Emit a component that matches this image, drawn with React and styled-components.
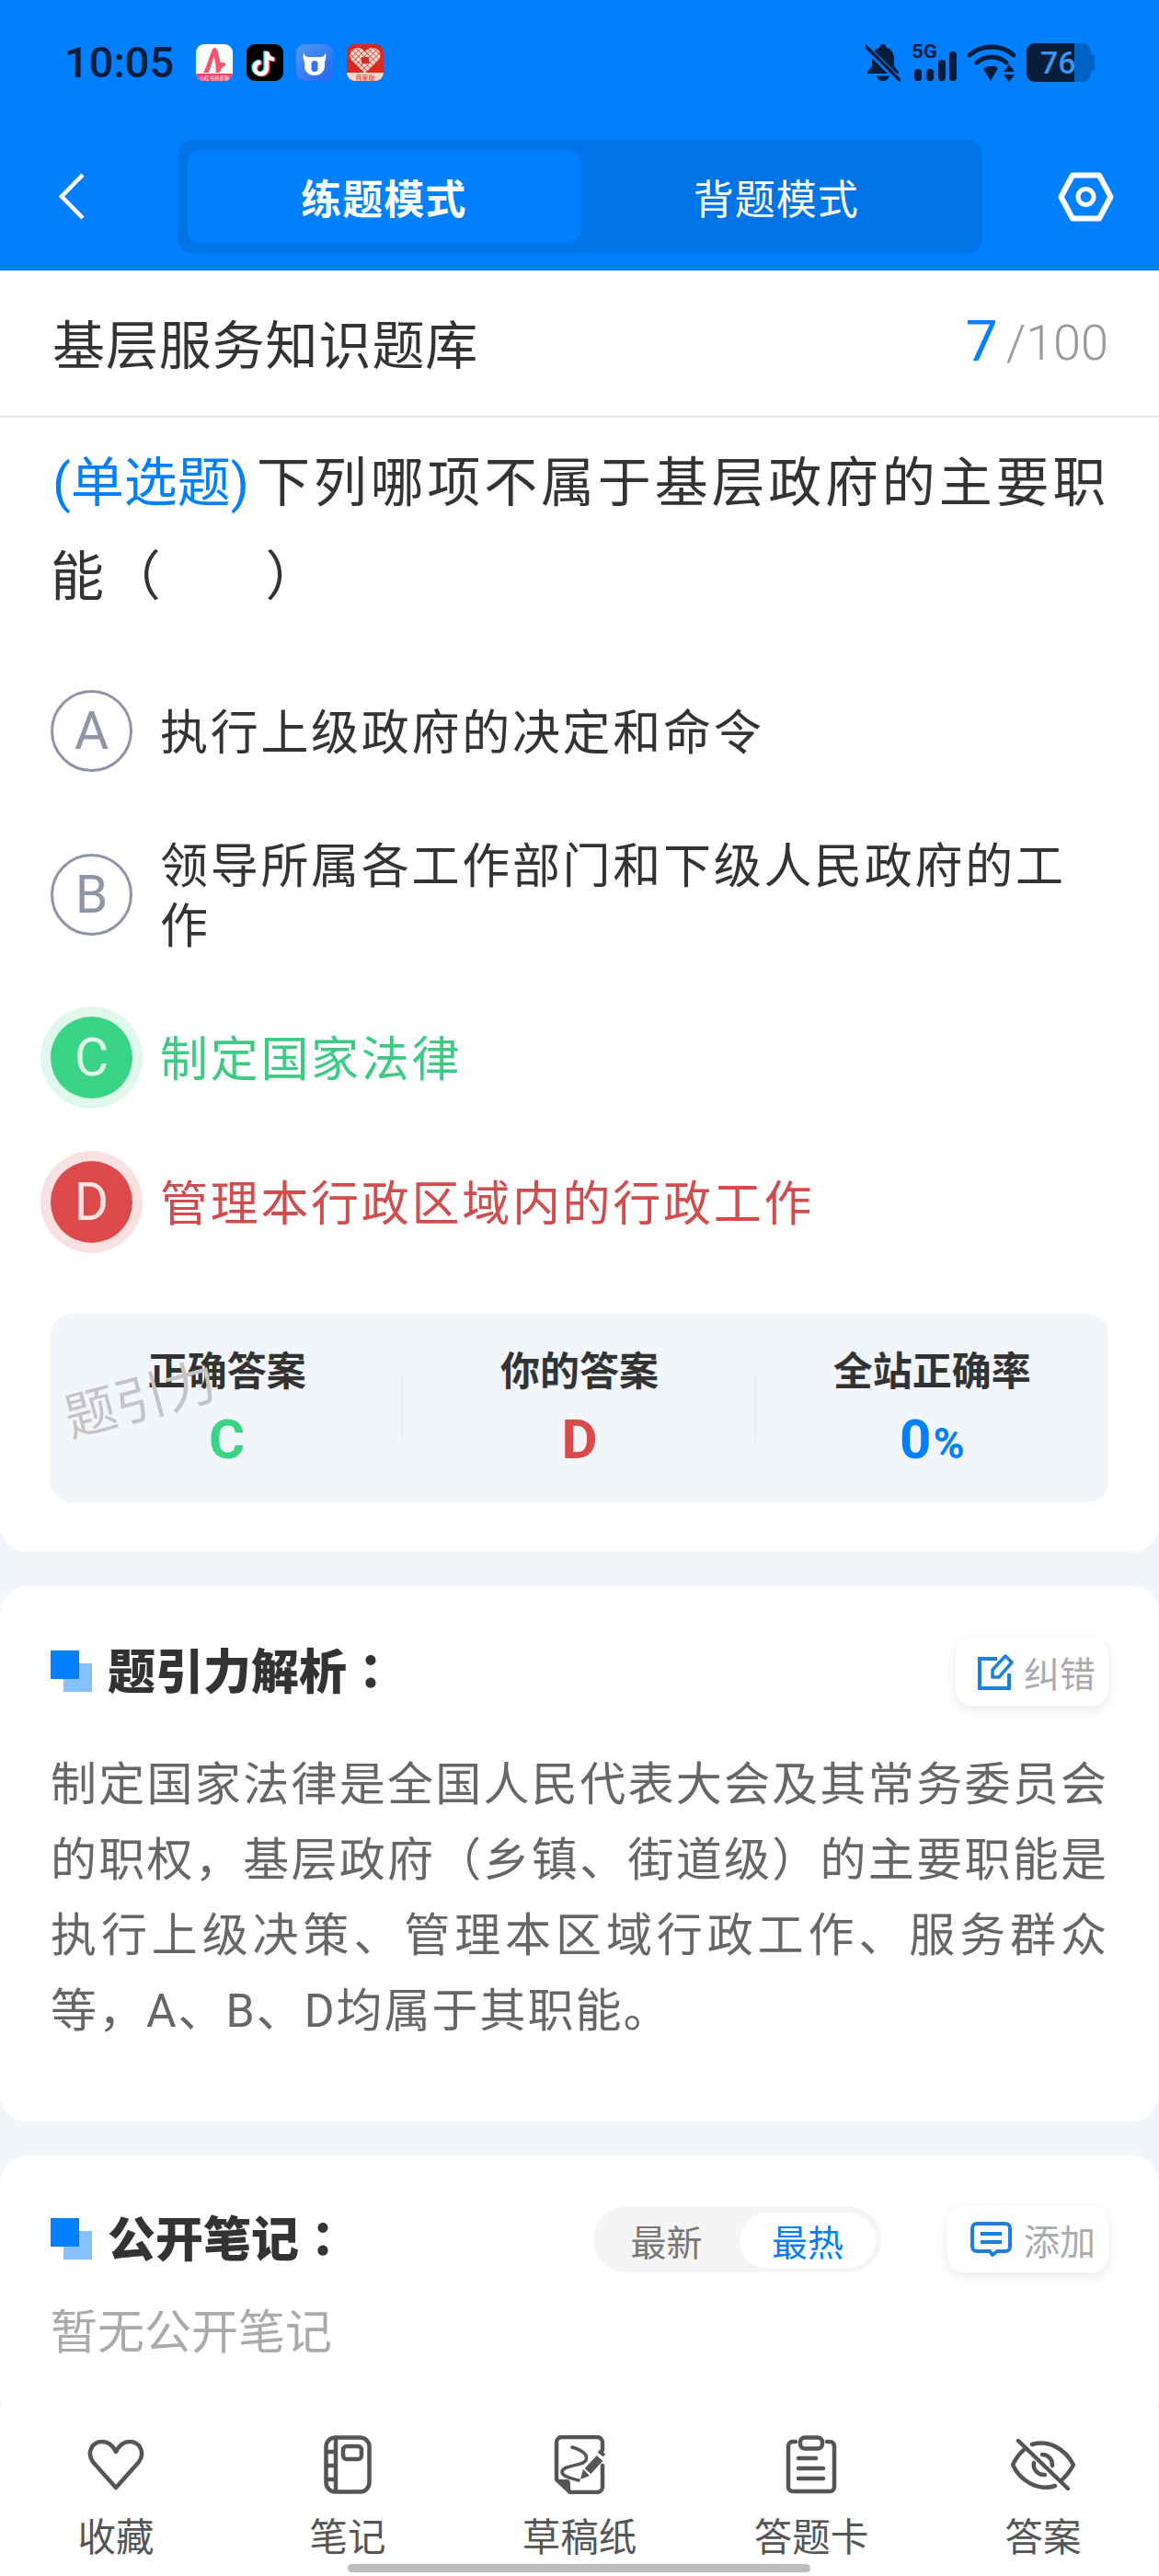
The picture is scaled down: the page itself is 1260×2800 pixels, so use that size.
import React from "react";
import styled, { createGlobalStyle } from "styled-components";

const Global = createGlobalStyle`
  html, body { margin: 0; padding: 0; background: #fff; }
  * { box-sizing: border-box; }
  body { font-family: Roboto, "Noto Sans CJK SC", sans-serif; }
`;

const BLUE = "#0080ff";
const DARK = "#071d3a";

const Page = styled.div`
  width: 1260px;
  height: 2800px;
  display: flex;
  flex-direction: column;
  position: relative;
  overflow: hidden;
  background: #f2f5f9;
`;
const Header = styled.header`
  height: 294px;
  flex: none;
  background: ${BLUE};
  padding-top: 47px;
`;
const StatusBar = styled.div`
  height: 42px;
  display: flex;
  align-items: center;
  padding: 0 70px;
`;
const Time = styled.span`
  font-size: 47px;
  line-height: 42px;
  font-weight: 500;
  color: ${DARK};
  width: 143px;
  flex: none;
`;
const AppIcons = styled.div`
  display: flex;
  gap: 14.5px;
  flex: 1;
`;
const SysIcons = styled.div`
  display: flex;
  align-items: center;
  gap: 12px;
`;
const NavRow = styled.div`
  margin-top: 63px;
  display: flex;
  align-items: center;
  padding-left: 64px;
`;
const Segment = styled.div`
  width: 875px;
  height: 123px;
  margin: 0 82px 0 101px;
  padding: 11px;
  display: flex;
  border-radius: 16px;
  background: #0073e6;
`;
const SegTab = styled.div`
  flex: 1;
  display: flex;
  align-items: center;
  justify-content: center;
  border-radius: 14px;
  font-size: 44px;
  letter-spacing: 1px;
  color: #fff;
  font-weight: ${(p) => (p.$on ? 700 : 400)};
  background: ${(p) => (p.$on ? BLUE : "transparent")};
`;
const Scroll = styled.main`
  flex: 1;
  min-height: 0;
  overflow: hidden;
`;
const Card = styled.section`
  background: #fff;
  padding: 0 55px;
  margin-bottom: 37px;
  border-radius: ${(p) => (p.$first ? "0 0 30px 30px" : "30px")};
  height: ${(p) => p.$h}px;
`;
const TitleRow = styled.div`
  height: 160px;
  margin: 0 -55px;
  padding: 0 55px 5px;
  display: flex;
  align-items: center;
  justify-content: space-between;
  border-bottom: 2px solid #e5e5e5;
`;
const BankName = styled.h1`
  margin: 0 0 0 2px;
  font-size: 57px;
  font-weight: 400;
  letter-spacing: 0.9px;
  color: #333;
`;
const Counter = styled.div`
  display: flex;
  align-items: center;
  padding-top: 4px;
  line-height: 70px;
  color: #999;
  font-size: 54px;
  font-weight: 300;
`;
const CounterNow = styled.span`
  color: ${BLUE};
  font-size: 62px;
  font-weight: 400;
  margin: -4px 9px 0 0;
`;
const Question = styled.p`
  margin: 20px -10px 0 0;
  font-size: 58px;
  line-height: 102px;
  letter-spacing: 3.8px;
  color: #333;
`;
const QType = styled.span`
  color: ${BLUE};
  letter-spacing: 0;
  margin-right: 8px;
  margin-left: 2px;
`;
const Blank = styled.span`
  display: inline-block;
  width: 110px;
`;
const Options = styled.div`
  margin-top: 72px;
  display: flex;
  flex-direction: column;
  gap: 68px;
`;
const Option = styled.div`
  display: flex;
  align-items: center;
  gap: 30px;
`;
const Badge = styled.div`
  width: 89px;
  height: 89px;
  flex: none;
  border-radius: 50%;
  display: flex;
  align-items: center;
  justify-content: center;
  font-size: 57px;
  font-weight: 400;
  ${(p) =>
    p.$state === "right"
      ? "background:#3bd385;color:#dff7ea;box-shadow:0 0 0 11px #e0f7ec;"
      : p.$state === "wrong"
      ? "background:#dc4a4c;color:#fbe3e3;box-shadow:0 0 0 11px #f9e1e1;"
      : "border:3px solid #8f94a7;color:#8f94a7;"}
`;
const OptionText = styled.div`
  padding-top: 3px;
  margin-bottom: -3px;
  font-size: 52px;
  line-height: 65px;
  letter-spacing: 2.7px;
  color: ${(p) =>
    p.$state === "right" ? "#3dcb84" : p.$state === "wrong" ? "#d24c4e" : "#333"};
`;
const Stats = styled.div`
  position: relative;
  margin-top: 77px;
  height: 205px;
  padding-top: 33px;
  display: grid;
  grid-template-columns: repeat(3, 1fr);
  border-radius: 22px;
  background: #f2f5f9;
`;
const Stat = styled.div`
  position: relative;
  text-align: center;
  &:nth-child(-n + 2)::after {
    content: "";
    position: absolute;
    right: 0;
    top: 34px;
    height: 72px;
    width: 2px;
    background: #e9ecf1;
  }
`;
const StatLabel = styled.div`
  font-size: 43px;
  line-height: 60px;
  font-weight: 700;
  color: #333;
`;
const StatValue = styled.div`
  margin-top: 9px;
  font-size: 60px;
  line-height: 70px;
  font-weight: 700;
  color: ${(p) => p.$c};
`;
const Percent = styled.span`
  font-size: 46px;
  margin-left: 2px;
`;
const Watermark = styled.div`
  position: absolute;
  left: 14px;
  top: 64px;
  font-size: 56px;
  line-height: 60px;
  font-weight: 400;
  color: #c4c4c4;
  transform: rotate(-15deg);
  pointer-events: none;
`;
const SectionHead = styled.div`
  padding-top: ${(p) => p.$top}px;
  display: flex;
  align-items: center;
`;
const Mark = styled.span`
  width: 45px;
  height: 45px;
  flex: none;
  position: relative;
  margin-right: 17px;
  &::before, &::after { content: ""; position: absolute; width: 31px; height: 31px; }
  &::after { right: 0; bottom: 0; background: #85c1ff; }
  &::before { left: 0; top: 0; background: ${BLUE}; z-index: 1; }
`;
const SectionTitle = styled.h2`
  margin: 0;
  flex: 1;
  font-size: 52px;
  line-height: 72px;
  font-weight: 900;
  color: #333;
`;
const Colon = styled.span`
  font-family: "Noto Sans CJK TC", sans-serif;
`;
const ChipButton = styled.div`
  height: ${(p) => p.$h}px;
  display: flex;
  align-items: center;
  gap: ${(p) => p.$gap}px;
  padding: 0 14px 0 ${(p) => p.$left}px;
  background: #fff;
  border-radius: 18px;
  box-shadow: 0 4px 14px rgba(0, 0, 0, 0.09);
  font-size: 39px;
  color: #aaa;
`;
const Paragraph = styled.p`
  margin: 44px 0 0;
  font-size: 50px;
  line-height: 82px;
  letter-spacing: 2px;
  color: #666;
  text-align: justify;
`;
const SortPill = styled.div`
  width: 313px;
  height: 72px;
  margin-right: 72px;
  padding: 7px 6px 5px 0;
  display: flex;
  border-radius: 36px;
  background: #f5f5f5;
`;
const SortItem = styled.div`
  display: flex;
  align-items: center;
  justify-content: center;
  width: ${(p) => p.$w}px;
  border-radius: 31px;
  font-size: 39px;
  color: ${(p) => (p.$on ? BLUE : "#777")};
  background: ${(p) => (p.$on ? "#fff" : "transparent")};
`;
const Empty = styled.div`
  margin-top: 29px;
  font-size: 51px;
  line-height: 70px;
  color: #aaa;
`;
const TabBar = styled.nav`
  height: 183px;
  flex: none;
  display: grid;
  grid-template-columns: repeat(5, 1fr);
  background: #fff;
`;
const Tab = styled.div`
  display: flex;
  flex-direction: column;
  align-items: center;
  color: #555;
`;
const TabIcon = styled.div`
  height: 64px;
  margin-top: 30px;
  display: flex;
  align-items: center;
  justify-content: center;
`;
const TabLabel = styled.div`
  margin-top: 23px;
  font-size: 41.5px;
  line-height: 50px;
  color: #555;
`;
const HomeBar = styled.div`
  position: absolute;
  left: 378px;
  bottom: 4px;
  width: 503px;
  height: 9px;
  border-radius: 5px;
  background: #bdbdbd;
`;

const RedApp = () => (
  <svg width="40" height="40" viewBox="0 0 40 40">
    <defs>
      <clipPath id="rr1"><rect width="40" height="40" rx="9" /></clipPath>
    </defs>
    <g clipPath="url(#rr1)">
      <rect width="40" height="40" fill="#fff" />
      <path d="M20 4 C22.500 4 23.500 6 24 9 L26.500 20 C29 19 32 20 33 23 C29 24 27 27 25.500 31 L21.500 31 C22 26 21.500 19 19.500 14 L14 31 L8 31 C13 23 16.500 4 20 4 Z" fill="#f4556a" />
      <rect y="32" width="40" height="8" fill="#e9436a" />
      <text x="20" y="38.500" fontSize="5.500" textAnchor="middle" fill="#fff" fontFamily="Noto Sans CJK SC">小红书商家版</text>
    </g>
  </svg>
);
const TikTok = () => {
  const d = "M22 8 V26 a6.5 6.5 0 1 1 -6.5 -6.5 M22 9 c0.5 4 3.500 7 8 7.500";
  return (
    <svg width="40" height="40" viewBox="0 0 40 40">
      <rect width="40" height="40" rx="9" fill="#000" />
      <path d={d} fill="none" stroke="#25f4ee" strokeWidth="4.500" transform="translate(-1.400 -0.800)" />
      <path d={d} fill="none" stroke="#fe2c55" strokeWidth="4.500" transform="translate(1.400 0.800)" />
      <path d={d} fill="none" stroke="#fff" strokeWidth="4.500" />
    </svg>
  );
};
const BullApp = () => (
  <svg width="40" height="40" viewBox="0 0 40 40">
    <defs>
      <linearGradient id="bull" x1="0" y1="0" x2="1" y2="1">
        <stop offset="0" stopColor="#4f97f3" />
        <stop offset="1" stopColor="#2566f2" />
      </linearGradient>
    </defs>
    <rect width="40" height="40" rx="9" fill="url(#bull)" />
    <path d="M8 9 C9 13 11 14 14 14 H26 C29 14 31 13 32 9 C33 14 32 17 31 19 V24 C31 30 26 34 20 34 C14 34 9 30 9 24 V19 C8 17 7 14 8 9 Z" fill="#fff" />
    <rect x="16.500" y="18" width="7" height="12" rx="3.500" fill="#2f74f3" />
  </svg>
);
const HeartApp = () => (
  <svg width="40" height="40" viewBox="0 0 40 40">
    <defs>
      <clipPath id="rr4"><rect width="40" height="40" rx="9" /></clipPath>
      <pattern id="lat" width="4.500" height="4.500" patternUnits="userSpaceOnUse" patternTransform="rotate(45)">
        <rect width="4.500" height="4.500" fill="#f8ded5" />
        <path d="M0 0 H4.500 M0 0 V4.500" stroke="#d8281f" strokeWidth="1.300" />
      </pattern>
    </defs>
    <g clipPath="url(#rr4)">
      <rect width="40" height="40" fill="#d8281f" />
      <path d="M20 32 L5 17 C1 11 5 4 12 4 C16 4 18 6 20 8 C22 6 24 4 28 4 C35 4 39 11 35 17 Z" fill="url(#lat)" />
      <rect x="16" y="14" width="8" height="7" fill="#d8281f" />
      <rect y="31" width="40" height="9" fill="#fbd9d0" />
      <text x="20" y="38.500" fontSize="7" textAnchor="middle" fill="#d8281f" fontFamily="Noto Sans CJK SC">商家版</text>
    </g>
  </svg>
);

const BellOff = () => (
  <svg width="38" height="42" viewBox="0 0 38 42">
    <path d="M19 1 C16.500 1 15.500 3 15.500 4.500 C10 6 7 11 7 17 V25 L2 31 V33 H36 V31 L31 25 V17 C31 11 28 6 22.500 4.500 C22.500 3 21.500 1 19 1 Z" fill={DARK} />
    <path d="M12 35.500 H26 C25 39 22 41 19 41 C16 41 13 39 12 35.500 Z" fill={DARK} />
    <path d="M1 5 L36 40" stroke={BLUE} strokeWidth="7" />
    <path d="M0 3 L37 40" stroke={DARK} strokeWidth="3.500" strokeLinecap="round" />
  </svg>
);
const Signal = () => (
  <svg width="49" height="42" viewBox="0 0 49 42">
    <text x="0" y="16" fontSize="20" fontWeight="700" fill={DARK} fontFamily="Roboto" textLength="28" lengthAdjust="spacingAndGlyphs">5G</text>
    <rect x="3" y="28" width="8" height="13" rx="3.500" fill={DARK} />
    <rect x="16" y="28" width="8" height="13" rx="3.500" fill={DARK} />
    <rect x="29" y="18" width="8" height="23" rx="3.500" fill={DARK} />
    <rect x="41" y="9" width="8" height="32" rx="3.500" fill={DARK} />
  </svg>
);
const Wifi = () => (
  <svg width="52" height="42" viewBox="0 0 52 42">
    <g fill="none" stroke={DARK} strokeWidth="5" strokeLinecap="round">
      <path d="M2 13 C15 1 37 1 50 13" />
      <path d="M10 21 C19 13 33 13 42 21" />
    </g>
    <path d="M17 28 C22 24 30 24 33 27 L25 41 Z" fill={DARK} />
    <path d="M45 23 L51 31 H39 Z M45 42 L39 34 H51 Z" fill={DARK} />
  </svg>
);
const Battery = () => (
  <svg width="74" height="42" viewBox="0 0 74 42">
    <rect x="0" y="0" width="70" height="42" rx="9" fill="#0062c4" />
    <rect x="70" y="12" width="4" height="18" rx="2" fill="#0062c4" />
    <path d="M9 0 H52 V42 H9 A9 9 0 0 1 0 33 V9 A9 9 0 0 1 9 0 Z" fill={DARK} />
    <text x="15" y="33" fontSize="34" fontWeight="500" fill="#3e94f2" fontFamily="Roboto">76</text>
  </svg>
);
const Back = () => (
  <svg width="28" height="51" viewBox="0 0 28 51">
    <path d="M26 2 L3 25.500 L26 49" fill="none" stroke="#fff" strokeWidth="4.500" />
  </svg>
);
const Gear = () => (
  <svg width="61" height="54" viewBox="0 0 61 54">
    <path d="M16 3.500 H45 L57.500 27 L45 50.500 H16 L3.500 27 Z" fill="none" stroke="#fff" strokeWidth="6" strokeLinejoin="round" />
    <circle cx="30.500" cy="27" r="8.500" fill="none" stroke="#fff" strokeWidth="5" />
  </svg>
);
const EditIcon = () => (
  <svg width="40" height="40" viewBox="0 0 40 40">
    <path d="M21 6 H2 V38 H34 V22" fill="none" stroke="#1a80e0" strokeWidth="4" />
    <path d="M16 26 V18 L30 3 L37 10 L23 26 Z" fill="none" stroke="#1a80e0" strokeWidth="3.500" strokeLinejoin="round" />
  </svg>
);
const NoteIcon = () => (
  <svg width="45" height="38" viewBox="0 0 45 38">
    <path d="M7 2 H38 A5 5 0 0 1 43 7 V27 A5 5 0 0 1 38 32 H29 L24 36 L21 32 H7 A5 5 0 0 1 2 27 V7 A5 5 0 0 1 7 2 Z" fill="none" stroke="#1a80e0" strokeWidth="4" strokeLinejoin="round" />
    <path d="M11 13 H34 M11 22 H34" stroke="#1a80e0" strokeWidth="4" />
  </svg>
);

const S = { fill: "none", stroke: "#555", strokeWidth: 4.5, strokeLinecap: "round", strokeLinejoin: "round" };
const Heart = () => (
  <svg width="64" height="56" viewBox="0 0 64 56">
    <path {...S} d="M32 53 L7 25 C0 15 6 3 17 3 C24 3 29 8 32 14 C35 8 40 3 47 3 C58 3 64 15 57 25 Z" />
  </svg>
);
const Notebook = () => (
  <svg width="52" height="64" viewBox="0 0 52 64">
    <rect {...S} x="2.500" y="2.500" width="47" height="59" rx="10" />
    <path {...S} strokeLinecap="butt" d="M13 3 V61 M3 18 H13 M3 33 H13 M3 48 H13" />
    <rect {...S} x="21" y="12" width="20" height="14" rx="4" />
  </svg>
);
const Draft = () => (
  <svg width="56" height="64" viewBox="0 0 56 64">
    <path {...S} d="M53 16 V8 A6 6 0 0 0 47 2 H9 A6 6 0 0 0 3 8 V48 L18 62 H47 A6 6 0 0 0 53 56 V33" />
    <path d="M3 48 H14 A4 4 0 0 1 18 52 V62 Z" fill="#555" />
    <path {...S} strokeWidth="3.500" d="M20 13 C30 16 38 21 35 27 C32 34 9 32 9 40 C9 45 20 47 27 49" />
    <path d="M50 25 L37 39" stroke="#555" strokeWidth="9" />
    <path d="M32 37 L39 44 L29 48 Z" fill="#555" />
    <path d="M49 17 L55 22" stroke="#555" strokeWidth="4" />
  </svg>
);
const CardIcon = () => (
  <svg width="56" height="64" viewBox="0 0 56 64">
    <path {...S} d="M11 7 H8 A5 5 0 0 0 3 12 V56 A5 5 0 0 0 8 61 H48 A5 5 0 0 0 53 56 V12 A5 5 0 0 0 48 7 H45" />
    <rect {...S} x="16" y="2.500" width="24" height="12" rx="5" />
    <path {...S} d="M14 25 H33 M14 36 H41 M14 47 H41" />
  </svg>
);
const EyeOff = () => (
  <svg width="70" height="56" viewBox="0 0 70 56">
    <path {...S} d="M8 2 L62 54" />
    <path {...S} d="M23 6 C41 1 58 10 68 28 C65 34 60 40 56 44" />
    <path {...S} d="M14 12 C9 16 5 22 2 28 C10 46 30 57 48 51" />
    <path {...S} d="M25 26 A11 11 0 0 0 37 39" />
    <path {...S} d="M34 17 A11 11 0 0 1 45 29" />
  </svg>
);

const tabs = [
  ["收藏", <Heart key="h" />],
  ["笔记", <Notebook key="n" />],
  ["草稿纸", <Draft key="d" />],
  ["答题卡", <CardIcon key="c" />],
  ["答案", <EyeOff key="e" />],
];

export default function App() {
  return (
    <Page>
      <Global />
      <Header>
        <StatusBar>
          <Time>10:05</Time>
          <AppIcons>
            <RedApp />
            <TikTok />
            <BullApp />
            <HeartApp />
          </AppIcons>
          <SysIcons>
            <BellOff />
            <Signal />
            <Wifi />
            <Battery />
          </SysIcons>
        </StatusBar>
        <NavRow>
          <Back />
          <Segment>
            <SegTab $on>练题模式</SegTab>
            <SegTab>背题模式</SegTab>
          </Segment>
          <Gear />
        </NavRow>
      </Header>
      <Scroll>
        <Card $first $h={1393}>
          <TitleRow>
            <BankName>基层服务知识题库</BankName>
            <Counter>
              <CounterNow>7</CounterNow>/100
            </Counter>
          </TitleRow>
          <Question>
            <QType>(单选题)</QType>
            下列哪项不属于基层政府的主要职能（<Blank />）
          </Question>
          <Options>
            <Option>
              <Badge>A</Badge>
              <OptionText>执行上级政府的决定和命令</OptionText>
            </Option>
            <Option>
              <Badge>B</Badge>
              <OptionText>领导所属各工作部门和下级人民政府的工作</OptionText>
            </Option>
            <Option>
              <Badge $state="right">C</Badge>
              <OptionText $state="right">制定国家法律</OptionText>
            </Option>
            <Option>
              <Badge $state="wrong">D</Badge>
              <OptionText $state="wrong">管理本行政区域内的行政工作</OptionText>
            </Option>
          </Options>
          <Stats>
            <Stat>
              <StatLabel>正确答案</StatLabel>
              <StatValue $c="#3bd385">C</StatValue>
            </Stat>
            <Stat>
              <StatLabel>你的答案</StatLabel>
              <StatValue $c="#d94a4d">D</StatValue>
            </Stat>
            <Stat>
              <StatLabel>全站正确率</StatLabel>
              <StatValue $c={BLUE}>
                0<Percent>%</Percent>
              </StatValue>
            </Stat>
            <Watermark>题引力</Watermark>
          </Stats>
        </Card>
        <Card $h={582}>
          <SectionHead $top={54}>
            <Mark />
            <SectionTitle>题引力解析<Colon>：</Colon></SectionTitle>
            <ChipButton $h={74} $left={24} $gap={10}>
              <EditIcon />
              纠错
            </ChipButton>
          </SectionHead>
          <Paragraph>
            制定国家法律是全国人民代表大会及其常务委员会的职权，基层政府（乡镇、街道级）的主要职能是执行上级决策、管理本区域行政工作、服务群众等，A、B、D均属于其职能。
          </Paragraph>
        </Card>
        <Card $h={290}>
          <SectionHead $top={52}>
            <Mark />
            <SectionTitle>公开笔记<Colon>：</Colon></SectionTitle>
            <SortPill>
              <SortItem $w={159}>最新</SortItem>
              <SortItem $on $w={148}>最热</SortItem>
            </SortPill>
            <ChipButton $h={72} $left={25} $gap={13}>
              <NoteIcon />
              添加
            </ChipButton>
          </SectionHead>
          <Empty>暂无公开笔记</Empty>
        </Card>
      </Scroll>
      <TabBar>
        {tabs.map(([label, icon]) => (
          <Tab key={label}>
            <TabIcon>{icon}</TabIcon>
            <TabLabel>{label}</TabLabel>
          </Tab>
        ))}
      </TabBar>
      <HomeBar />
    </Page>
  );
}
